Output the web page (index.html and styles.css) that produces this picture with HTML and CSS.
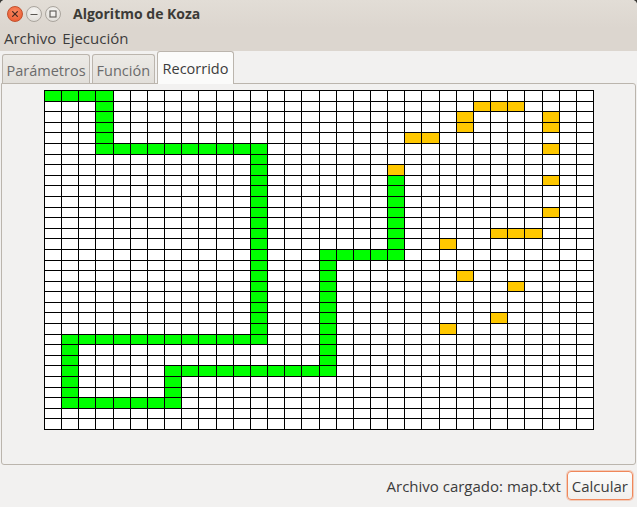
FILE: index.html
```html
<!DOCTYPE html>
<html lang="es">
<head>
<meta charset="utf-8">
<title>Algoritmo de Koza</title>
<link rel="stylesheet" href="styles.css">
</head>
<body>
<div class="window">
  <header class="titlebar">
    <div class="controls">
      <span class="btn close"><svg viewBox="0 0 14 14" width="14" height="14"><path d="M4.6 4.6 L9.4 9.4 M9.4 4.6 L4.6 9.4" stroke="#4a2a20" stroke-width="1.3" stroke-linecap="round"/></svg></span>
      <span class="btn"><svg viewBox="0 0 14 14" width="14" height="14"><path d="M3.5 7.5 H10.5" stroke="#5a5752" stroke-width="1.2"/></svg></span>
      <span class="btn"><svg viewBox="0 0 14 14" width="14" height="14"><rect x="4" y="4" width="6" height="6" fill="none" stroke="#5a5752" stroke-width="1.1"/></svg></span>
    </div>
    <div class="title">Algoritmo de Koza</div>
  </header>
  <nav class="menubar">
    <span class="menu">Archivo</span>
    <span class="menu">Ejecución</span>
  </nav>
  <div class="tabs">
    <div class="tab">Parámetros</div>
    <div class="tab">Función</div>
    <div class="tab active">Recorrido</div>
  </div>
  <main class="panel">
    <div class="board" id="board"></div>
  </main>
  <footer class="status">
    <span class="status-text">Archivo cargado: map.txt</span>
    <button class="calc">Calcular</button>
  </footer>
</div>
<script src="script.js"></script>
</body>
</html>
```
FILE: styles.css
```css
html, body {
  margin: 0;
  padding: 0;
  background: #3a3935;
}
body {
  width: 637px;
  height: 507px;
  overflow: hidden;
  font-family: "Open Sans", "DejaVu Sans", sans-serif;
  color: #3c3c3c;
}
.window {
  width: 637px;
  height: 507px;
  background: #f2f1f0;
  border-radius: 5px 5px 0 0;
  overflow: hidden;
  display: flex;
  flex-direction: column;
}
.titlebar {
  height: 28px;
  display: flex;
  align-items: center;
  background: linear-gradient(#e2ddd6, #dcd6cf);
}
.controls {
  display: flex;
  gap: 3px;
  padding-left: 7px;
  align-items: center;
}
.btn {
  width: 16px;
  height: 16px;
  border-radius: 50%;
  box-sizing: border-box;
  border: 1px solid #aaa59e;
  background: radial-gradient(circle at 50% 35%, #f7f6f4, #dcd8d2);
  display: flex;
  align-items: center;
  justify-content: center;
}
.btn.close {
  border-color: #c2502c;
  background: radial-gradient(circle at 50% 35%, #fa8a62, #e9542a);
}
.title {
  margin-left: 12px;
  font-weight: bold;
  font-size: 14px;
  color: #3c3b37;
  padding-bottom: 1px;
}
.menubar {
  height: 23px;
  display: flex;
  align-items: center;
  gap: 6px;
  padding-left: 4px;
  padding-bottom: 3px;
  box-sizing: border-box;
  background: #dcd6cf;
  font-size: 15px;
  line-height: 20px;
}
.tabs {
  height: 32px;
  display: flex;
  align-items: flex-end;
  gap: 2px;
  padding-left: 2px;
  position: relative;
  z-index: 1;
}
.tab {
  height: 29px;
  box-sizing: border-box;
  padding: 2px 3.5px 0;
  display: flex;
  align-items: center;
  font-size: 14.5px;
  color: #6b6b6b;
  border: 1px solid #bbb5ad;
  border-bottom: none;
  border-radius: 3px 3px 0 0;
  background: linear-gradient(#eceae6, #e2dfda);
}
.tab.active {
  height: 33px;
  margin-bottom: -1px;
  color: #3c3c3c;
  background: #fbfbfa;
  padding: 0 5px;
}
.panel {
  margin: 0 1px;
  height: 382px;
  box-sizing: border-box;
  border: 1px solid #bbb5ad;
  border-radius: 0 3px 3px 3px;
  background: #f2f1f0;
  display: flex;
  justify-content: center;
  align-items: flex-start;
  padding-top: 6px;
  padding-left: 1px;
}
.board {
  width: 550px;
  height: 340px;
  box-sizing: border-box;
  padding: 1px;
  gap: 1px;
  background: #000;
  display: grid;
  grid-template-columns: repeat(32, 1fr);
  grid-template-rows: repeat(32, 1fr);
}
.cell { background: #fff; }
.cell.g { background: #00ff00; }
.cell.y { background: #ffc800; }
.status {
  flex: 1;
  display: flex;
  justify-content: flex-end;
  align-items: center;
  gap: 6px;
  padding-right: 4px;
  padding-bottom: 1px;
}
.status-text {
  font-size: 15px;
  color: #3c3c3c;
}
.calc {
  height: 29px;
  padding: 0 4px;
  font-family: inherit;
  font-size: 15px;
  color: #3c3c3c;
  border: 1px solid #f0875a;
  border-radius: 4px;
  background: linear-gradient(#fdfdfc, #f1efec);
  box-shadow: 0 0 0 1px rgba(240, 135, 90, 0.35);
}
```
FILE: script.js
```js
(function () {
  var N = 32;
  var green = {};
  function g(r, c) { green[r + "," + c] = true; }
  function hrow(r, c0, c1) { for (var c = c0; c <= c1; c++) g(r, c); }
  function vcol(c, r0, r1) { for (var r = r0; r <= r1; r++) g(r, c); }
  hrow(0, 0, 3);
  vcol(3, 1, 4);
  hrow(5, 3, 12);
  vcol(12, 6, 22);
  hrow(23, 1, 12);
  vcol(1, 24, 28);
  hrow(29, 1, 7);
  vcol(7, 27, 28);
  hrow(26, 7, 16);
  vcol(16, 16, 25);
  hrow(15, 16, 20);
  vcol(20, 8, 14);
  var yellowList = [[1,25],[1,26],[1,27],[2,24],[2,29],[3,24],[3,29],[4,21],[4,22],[5,29],[7,20],[8,29],[11,29],[13,26],[13,27],[13,28],[14,23],[17,24],[18,27],[21,26],[22,23]];
  var yellow = {};
  yellowList.forEach(function (p) { yellow[p[0] + "," + p[1]] = true; });
  var board = document.getElementById("board");
  var frag = document.createDocumentFragment();
  for (var r = 0; r < N; r++) {
    for (var c = 0; c < N; c++) {
      var d = document.createElement("div");
      var k = r + "," + c;
      d.className = "cell" + (green[k] ? " g" : yellow[k] ? " y" : "");
      frag.appendChild(d);
    }
  }
  board.appendChild(frag);
})();
```
